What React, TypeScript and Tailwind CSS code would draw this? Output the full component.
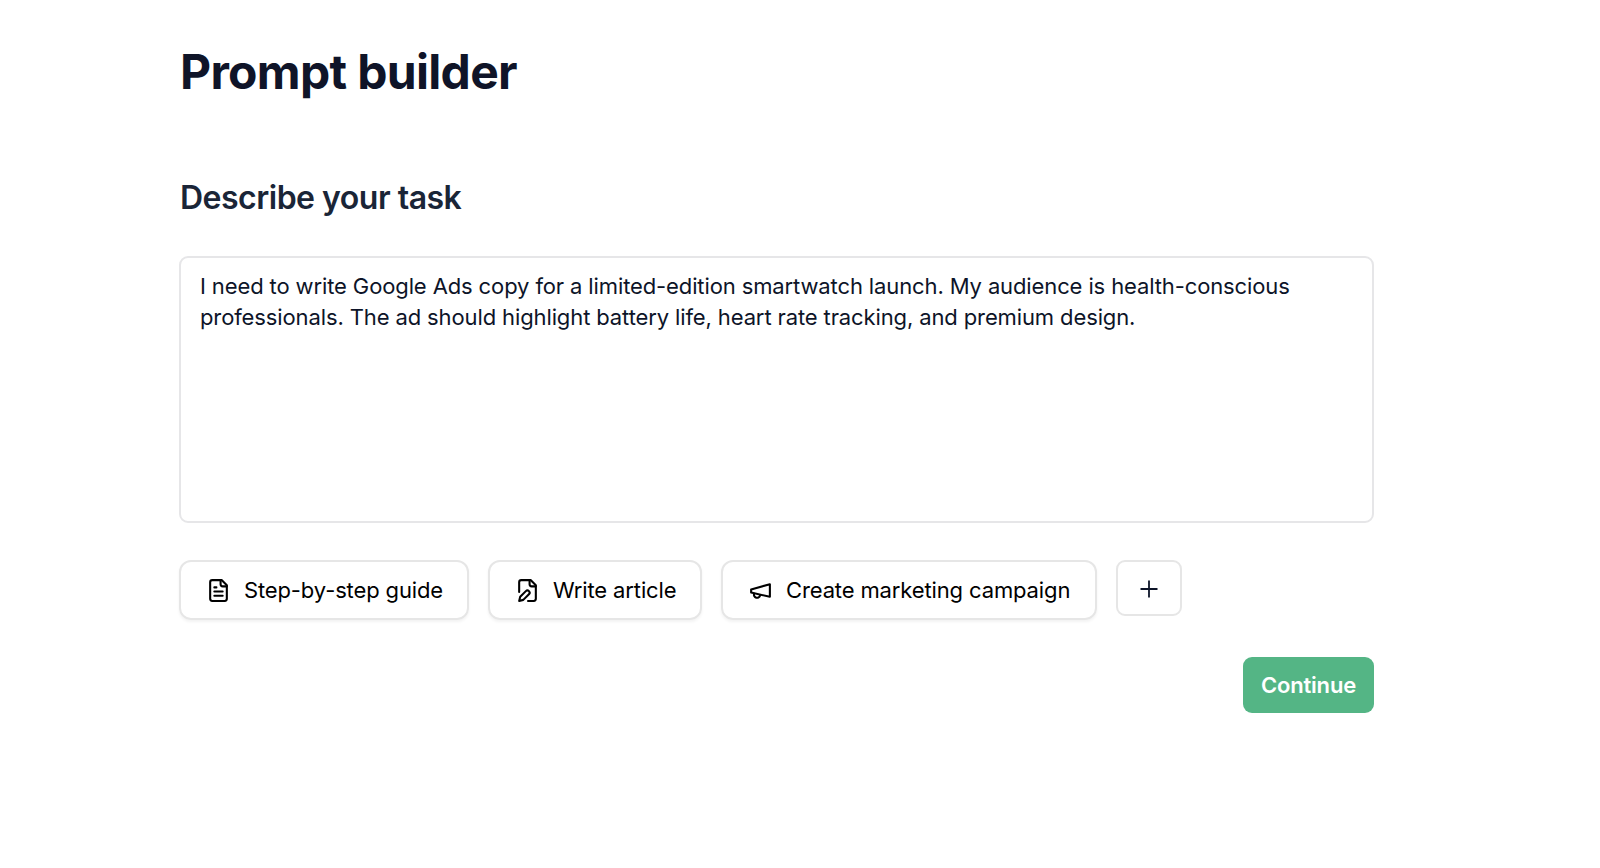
import { useState } from "react";
import type { ReactNode } from "react";

const Icon = ({ children }: { children: ReactNode }) => (
  <svg
    className="h-[25px] w-[25px] shrink-0"
    viewBox="0 0 24 24"
    fill="none"
    stroke="currentColor"
    strokeWidth={2}
    strokeLinecap="round"
    strokeLinejoin="round"
  >
    {children}
  </svg>
);

const FileTextIcon = () => (
  <Icon>
    <path d="M15 2H6a2 2 0 0 0-2 2v16a2 2 0 0 0 2 2h12a2 2 0 0 0 2-2V7Z" />
    <path d="M14 2v4a2 2 0 0 0 2 2h4" />
    <path d="M10 9H8" />
    <path d="M16 13H8" />
    <path d="M16 17H8" />
  </Icon>
);

const FilePenIcon = () => (
  <Icon>
    <path d="M4 13.5V4a2 2 0 0 1 2-2h9l5 5v13a2 2 0 0 1-2 2h-5.5" />
    <path d="M14 2v4a2 2 0 0 0 2 2h4" />
    <path d="M10.42 12.61a2.1 2.1 0 1 1 2.97 2.97L7.95 21 4 22l.99-3.95 5.43-5.44Z" />
  </Icon>
);

const MegaphoneIcon = () => (
  <Icon>
    <path d="m3 11 18-5v12L3 14v-3z" />
    <path d="M11.6 16.8a3 3 0 1 1-5.8-1.6" />
  </Icon>
);

const templates = [
  { label: "Step-by-step guide", icon: <FileTextIcon />, width: "w-[290px]" },
  { label: "Write article", icon: <FilePenIcon />, width: "w-[214px]" },
  {
    label: "Create marketing campaign",
    icon: <MegaphoneIcon />,
    width: "w-[376px]",
  },
];

const App = () => {
  const [task, setTask] = useState<string>(
    "I need to write Google Ads copy for a limited-edition smartwatch launch. My audience is health-conscious professionals. The ad should highlight battery life, heart rate tracking, and premium design."
  );

  return (
    <div className="min-h-screen bg-white pl-[179px] pt-[44px] font-['Inter',sans-serif]">
      <div className="w-[1195px]">
        <h1 className="pl-px text-[48px] leading-[56px] font-bold tracking-[-0.68px] text-[#0f1428]">
          Prompt builder
        </h1>

        <h2 className="mt-[77px] pl-px text-[32px] leading-[42px] font-semibold tracking-[-0.5px] text-[#1a2537]">
          Describe your task
        </h2>

        <textarea
          className="mt-[37px] block h-[267px] w-full resize-none rounded-[9px] border-2 border-[#e6e6e8] pt-[13px] pr-[18px] pl-[19px] text-[22px] leading-[31px] tracking-[-0.118px] text-[#0d1428] outline-none"
          value={task}
          onChange={(e) => setTask(e.target.value)}
        />

        {/* Templates */}
        <div className="mt-[37px] flex items-start gap-[19px]">
          {templates.map((item) => (
            <button
              key={item.label}
              className={`flex h-[60px] items-center gap-[13px] rounded-[12px] border-2 border-[#e6e6e6] pl-[25px] text-[22px] tracking-[-0.13px] whitespace-nowrap text-black shadow-[0_2px_3px_rgba(0,0,0,0.05)] ${item.width}`}
            >
              {item.icon}
              {item.label}
            </button>
          ))}
          <button className="flex h-[56px] w-[66px] items-center justify-center rounded-[9px] border-2 border-[#e6e6e6] text-[#0d1428]">
            <svg
              className="mt-px h-[24px] w-[24px]"
              viewBox="0 0 24 24"
              fill="none"
              stroke="currentColor"
              strokeWidth={1.8}
            >
              <path d="M3.5 12h17M12 3.5v17" />
            </svg>
          </button>
        </div>

        <div className="mt-[37px] flex justify-end">
          <button className="h-[56px] w-[131px] rounded-[9px] bg-[#54b585] text-[22px] font-semibold tracking-[-0.2px] text-white">
            Continue
          </button>
        </div>
      </div>
    </div>
  );
};

export default App;
